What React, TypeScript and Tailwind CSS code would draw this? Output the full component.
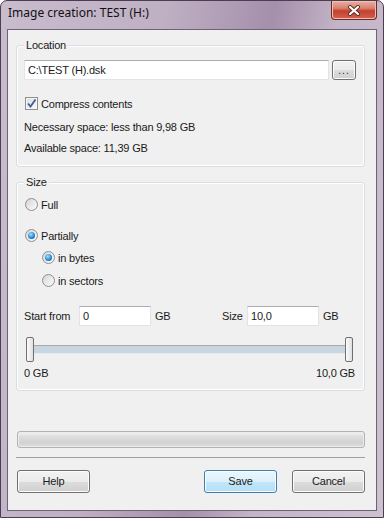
import React from "react";

const font = { fontFamily: '"Liberation Sans", Arial, sans-serif' };

const GroupBox = ({ label, className, children }: { label: string; className?: string; children: React.ReactNode }) => (
  <div className={`relative rounded-[3px] border border-[#d5dfe5] shadow-[inset_0_0_0_1px_#ffffff] ${className ?? ""}`}>
    <span className="absolute -top-[8px] left-[7px] bg-[#f0f0f0] px-[2px] leading-[14px]">{label}</span>
    {children}
  </div>
);

const TextBox = ({ value, className }: { value: string; className?: string }) => (
  <div className={`h-[20px] bg-white border border-[#e2e3ea] border-t-[#abadb3] flex items-center pl-[3px] leading-[14px] ${className ?? ""}`}>
    {value}
  </div>
);

const Radio = ({ checked, label, className }: { checked?: boolean; label: string; className?: string }) => (
  <div className={`flex items-center h-[13px] ${className ?? ""}`}>
    <div className="w-[13px] h-[13px] rounded-full border border-[#8e8f8f] bg-[linear-gradient(135deg,#d6d6d6,#fbfbfb)] flex items-center justify-center">
      {checked && (
        <div className="w-[7px] h-[7px] rounded-full bg-[radial-gradient(circle_at_40%_35%,#a6e3ff,#2a8ad4_55%,#0e4a86)]" />
      )}
    </div>
    <span className="ml-[3px] leading-[14px]">{label}</span>
  </div>
);

const Button = ({ label, primary }: { label: string; primary?: boolean }) => (
  <div
    className={`w-[73px] h-[23px] rounded-[3px] border flex items-center justify-center shadow-[inset_0_0_0_1px_#fcfcfc] ${
      primary
        ? "border-[#3c7fb1] bg-[linear-gradient(to_bottom,#ecf7fd_0%,#dbf0fb_50%,#c4e7f9_50%,#b3def5_100%)]"
        : "border-[#707070] bg-[linear-gradient(to_bottom,#f2f2f2_0%,#ebebeb_50%,#dddddd_50%,#cfcfcf_100%)]"
    }`}
  >
    {label}
  </div>
);

const Thumb = () => (
  <div className="w-[8px] h-[25px] rounded-[2px] border border-[#707070] bg-[linear-gradient(to_right,#fbfbfb,#e0e0e0)] shrink-0" />
);

export default function App() {
  return (
    <div className="w-[384px] h-[518px] overflow-hidden bg-white">
      <div className="w-[384px] h-[518px] rounded-t-[7px] border border-[#4a3e50] bg-[linear-gradient(100deg,#c9bccd_0%,#bfb0c4_35%,#a58fab_58%,#c3b4c7_72%,#cdc1d0_100%)] px-[6px] pb-[6px] flex flex-col relative">
        {/* Title bar */}
        <div className="h-[28px] pt-[4px] pl-[1px] text-[12px] leading-[16px] text-[#111]" style={{ fontFamily: '"Noto Sans", "Open Sans", sans-serif' }}>
          Image creation: TEST (H:)
        </div>
        <div className="absolute top-0 right-[6px] w-[46px] h-[19px] rounded-b-[4px] border border-t-0 border-[#6b2a25] bg-[linear-gradient(to_bottom,#e9b0a4_0%,#d7826f_40%,#c2412f_55%,#d3624c_100%)] shadow-[inset_0_0_0_1px_#f0c0b5] flex items-center justify-center">
          <svg width="14" height="11" viewBox="0 0 14 11">
            <path d="M3 2 L11 9 M11 2 L3 9" stroke="#5a2a28" strokeWidth="4" strokeLinecap="round" />
            <path d="M3 2 L11 9 M11 2 L3 9" stroke="#ffffff" strokeWidth="2.2" strokeLinecap="round" />
          </svg>
        </div>

        {/* Client area */}
        <div className="flex-1 bg-[#f0f0f0] border border-[#6f6274] text-[11px] text-[#1a1a1a] tracking-[-0.2px]" style={font}>
          <div className="ml-[8px] w-[349px] flex flex-col">
            <GroupBox label="Location" className="mt-[15px] pt-[14px] pb-[11px] pl-[7px] pr-[8px]">
              <div className="flex items-center">
                <TextBox value="C:\TEST (H).dsk" className="w-[305px]" />
                <div className="ml-[3px] w-[24px] h-[20px] rounded-[3px] border border-[#707070] bg-[linear-gradient(to_bottom,#f2f2f2_0%,#ebebeb_50%,#dddddd_50%,#cfcfcf_100%)] shadow-[inset_0_0_0_1px_#fcfcfc] flex items-end justify-center pb-[4px] leading-[8px] text-[10px] tracking-[1px]">
                  ...
                </div>
              </div>
              <div className="flex items-center h-[13px] mt-[17px] ml-[1px]">
                <div className="w-[13px] h-[13px] border border-[#8e8f8f] bg-[linear-gradient(135deg,#dcdcdc,#fafafa)] shadow-[inset_0_0_0_1px_#f4f4f4] flex items-center justify-center">
                  <svg width="11" height="11" viewBox="0 0 11 11">
                    <path d="M2 5.5 L4.5 8.5 L9.5 1.5" stroke="#3c5c9a" strokeWidth="1.8" fill="none" />
                  </svg>
                </div>
                <span className="ml-[3px] leading-[14px]">Compress contents</span>
              </div>
              <div className="mt-[10px] leading-[14px]">Necessary space: less than 9,98 GB</div>
              <div className="mt-[7px] leading-[14px]">Available space: 11,39 GB</div>
            </GroupBox>

            <GroupBox label="Size" className="mt-[15px] pt-[15px] pb-[10px] pl-[8px] pr-[9px]">
              <Radio label="Full" />
              <Radio label="Partially" checked className="mt-[18px]" />
              <Radio label="in bytes" checked className="mt-[9px] ml-[17px]" />
              <Radio label="in sectors" className="mt-[10px] ml-[17px]" />
              <div className="flex items-center mt-[19px] -ml-[1px]">
                <span className="w-[55px] leading-[14px]">Start from</span>
                <TextBox value="0" className="w-[72px]" />
                <span className="ml-[4px] w-[67px] leading-[14px]">GB</span>
                <span className="w-[25px] leading-[14px]">Size</span>
                <TextBox value="10,0" className="w-[72px]" />
                <span className="ml-[4px] leading-[14px]">GB</span>
              </div>
              <div className="flex items-center mt-[11px] ml-[1px] mr-[2px]">
                <Thumb />
                <div className="flex-1 h-[9px] border-t border-[#a9a9a9] border-b border-b-[#e6edf2] bg-[#c8d6e1]" />
                <Thumb />
              </div>
              <div className="flex justify-between mt-[4px] -ml-[1px] leading-[14px]">
                <span>0 GB</span>
                <span>10,0 GB</span>
              </div>
            </GroupBox>

            <div className="mt-[40px] ml-[1px] h-[17px] rounded-[3px] border border-[#b2b2b2] bg-[linear-gradient(to_bottom,#f4f4f4_0%,#dedede_30%,#d2d2d2_70%,#dcdcdc_100%)] shadow-[inset_0_0_0_1px_#ececec]" />
            <div className="mt-[9px] h-px bg-[#a0a0a0]" />
            <div className="mt-[12px] flex ml-[1px]">
              <Button label="Help" />
              <div className="flex-1" />
              <Button label="Save" primary />
              <div className="w-[15px]" />
              <Button label="Cancel" />
            </div>
          </div>
        </div>
      </div>
    </div>
  );
}
